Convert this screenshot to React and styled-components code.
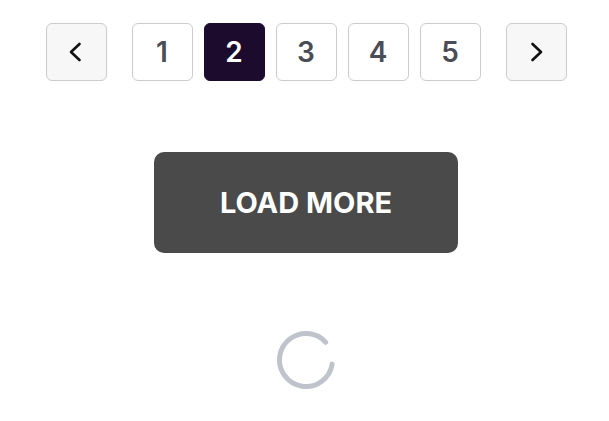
import React from 'react';
import styled, { createGlobalStyle } from 'styled-components';

const GlobalStyle = createGlobalStyle`
  body {
    margin: 0;
    background: #ffffff;
    font-family: Inter, "Noto Sans", sans-serif;
  }
`;

const Page = styled.div`
  display: flex;
  flex-direction: column;
  align-items: center;
  padding-top: 23px;
  padding-left: 3px;
`;

const Pager = styled.nav`
  display: flex;
  align-items: center;
  gap: 25px;
`;

const Pages = styled.div`
  display: flex;
  gap: 11px;
`;

const PageButton = styled.button`
  box-sizing: border-box;
  width: 61px;
  height: 58px;
  display: flex;
  align-items: center;
  justify-content: center;
  border: 1.5px solid ${p => (p.$active ? '#1d0b2e' : '#cbcbcb')};
  border-radius: 6px;
  background: ${p => (p.$active ? '#1d0b2e' : p.$arrow ? '#f7f7f7' : '#ffffff')};
  color: ${p => (p.$active ? '#ffffff' : '#4a4d55')};
  font-family: Inter, sans-serif;
  font-size: 28px;
  font-weight: 600;
  padding: 0;
  cursor: pointer;
`;

const LoadMore = styled.button`
  box-sizing: border-box;
  margin-top: 71px;
  width: 304px;
  height: 101px;
  border: none;
  border-radius: 10px;
  background: #4a4a4a;
  color: #ffffff;
  font-family: Inter, sans-serif;
  font-size: 29px;
  font-weight: 700;
  cursor: pointer;
`;

const Spinner = styled.svg`
  margin-top: 77px;
  display: block;
`;

const Chevron = ({ dir }) => (
  <svg width="24" height="24" viewBox="0 0 24 24" fill="none">
    <path
      d={dir === 'left' ? 'M15.5 4 L7 12 L15.5 20' : 'M8.5 4 L17 12 L8.5 20'}
      stroke="#111111"
      strokeWidth="2.6"
      strokeLinecap="round"
      strokeLinejoin="round"
    />
  </svg>
);

export default function App() {
  const pages = [1, 2, 3, 4, 5];
  const current = 2;
  return (
    <Page>
      <GlobalStyle />
      <Pager>
        <PageButton $arrow aria-label="Previous">
          <Chevron dir="left" />
        </PageButton>
        <Pages>
          {pages.map(n => (
            <PageButton key={n} $active={n === current}>
              {n}
            </PageButton>
          ))}
        </Pages>
        <PageButton $arrow aria-label="Next">
          <Chevron dir="right" />
        </PageButton>
      </Pager>
      <LoadMore>LOAD MORE</LoadMore>
      <Spinner width="60" height="60" viewBox="0 0 60 60">
        <circle
          cx="30"
          cy="30"
          r="26.5"
          fill="none"
          stroke="#bfc3cc"
          strokeWidth="5"
          strokeLinecap="round"
          strokeDasharray="142 166.5"
          transform="rotate(9 30 30)"
        />
      </Spinner>
    </Page>
  );
}
